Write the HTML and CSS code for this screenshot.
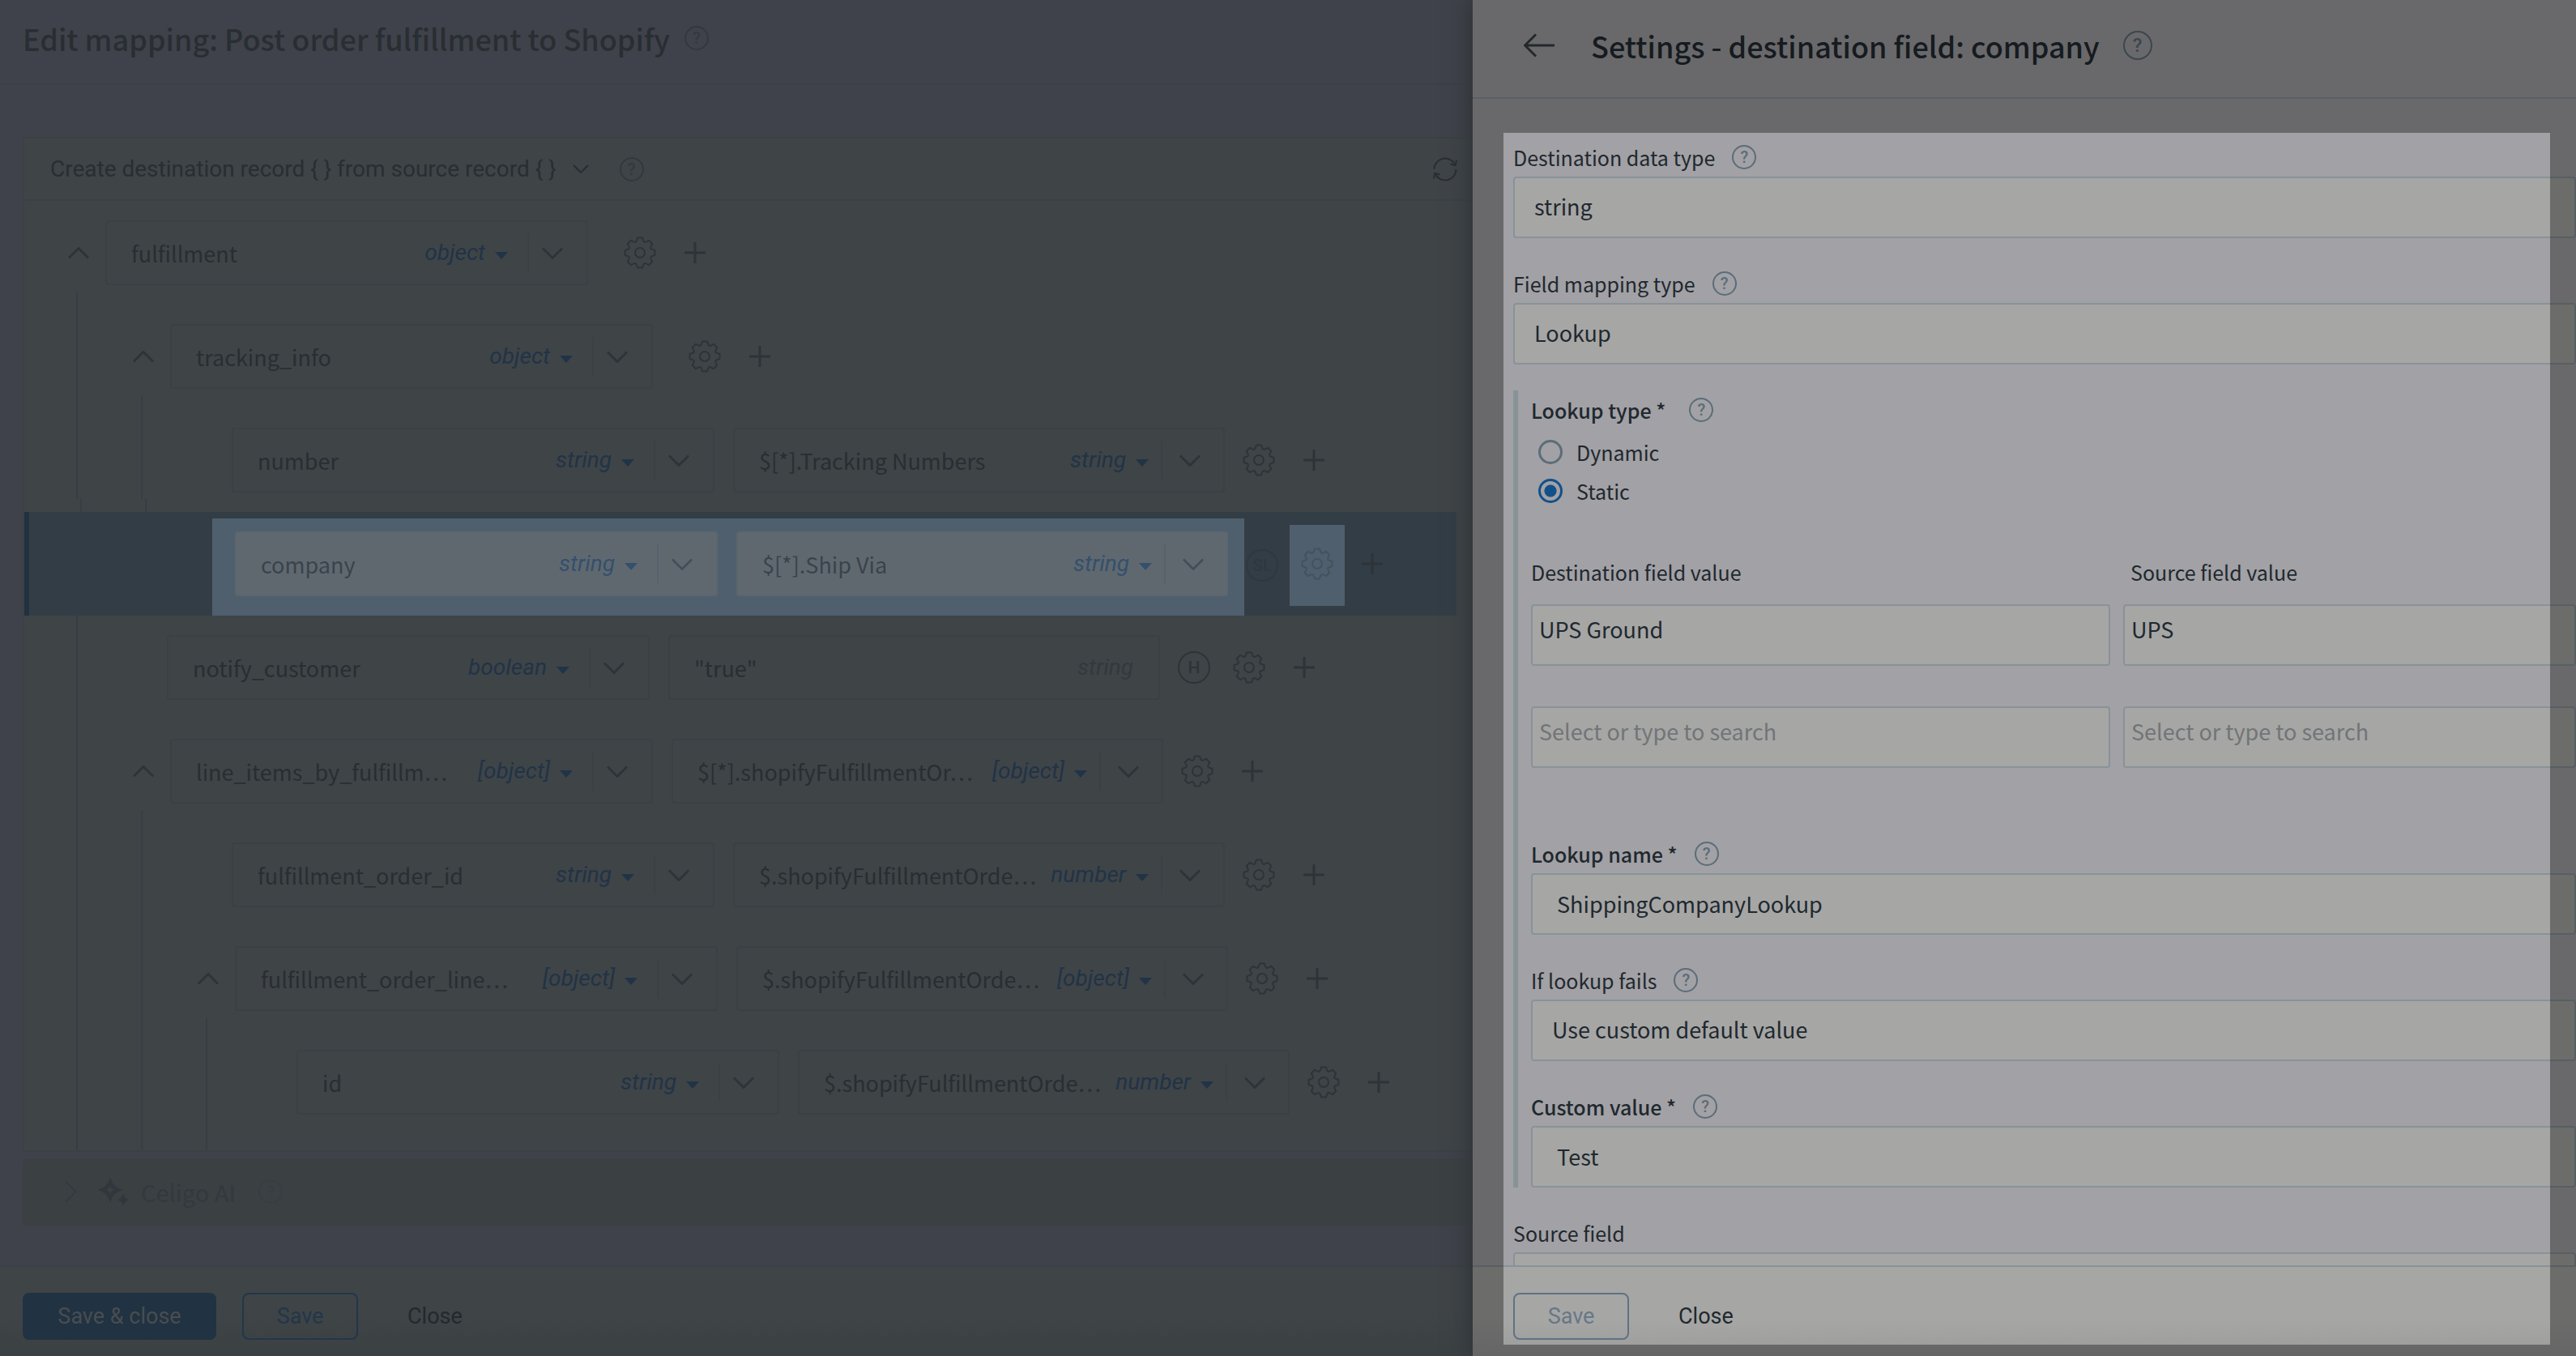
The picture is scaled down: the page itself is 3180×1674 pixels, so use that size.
FILE: index.html
```
<!DOCTYPE html>
<html lang="en">
<head>
<meta charset="utf-8">
<meta name="viewport" content="width=device-width, initial-scale=1">
<title>Edit mapping: Post order fulfillment to Shopify</title>
<link rel="stylesheet" href="styles.css">
</head>
<body>
<svg class="sprite" aria-hidden="true">
  <symbol id="gear" viewBox="-20 -20 40 40"><path d="M-3-18.5H3L4.5-14.2A2 2 0 0 0 6.9-13.2L11-15.2L15.2-11L13.2-6.9A2 2 0 0 0 14.2-4.5L18.5-3V3L14.2 4.5A2 2 0 0 0 13.2 6.9L15.2 11L11 15.2L6.9 13.2A2 2 0 0 0 4.5 14.2L3 18.5H-3L-4.5 14.2A2 2 0 0 0-6.9 13.2L-11 15.2L-15.2 11L-13.2 6.9A2 2 0 0 0-14.2 4.5L-18.5 3V-3L-14.2-4.5A2 2 0 0 0-13.2-6.9L-15.2-11L-11-15.2L-6.9-13.2A2 2 0 0 0-4.5-14.2Z"/><circle r="6"/></symbol>
  <symbol id="plus" viewBox="0 0 26 26"><path d="M13 0V26M0 13H26"/></symbol>
  <symbol id="down" viewBox="0 0 28 16"><path d="M1 1.500L14 14.500L27 1.500"/></symbol>
  <symbol id="up" viewBox="0 0 28 16"><path d="M1 14.500L14 1.500L27 14.500"/></symbol>
  <symbol id="right" viewBox="0 0 16 28"><path d="M1.500 1L14.500 14L1.500 27"/></symbol>
  <symbol id="back" viewBox="0 0 38 30"><path d="M15 1.500L1.500 15L15 28.500M1.500 15H38"/></symbol>
  <symbol id="refresh" viewBox="0 0 30 30"><path d="M1.500 15A13.500 13.500 0 0 1 27.500 10M28.500 15A13.500 13.500 0 0 1 2.500 20M29 3.500L27.700 10.300L21.500 8.500M1 26.500L2.300 19.700L8.500 21.500"/></symbol>
  <symbol id="sparkle" viewBox="0 0 40 36"><path fill-rule="evenodd" d="M16 0Q19 13 32 16Q19 19 16 32Q13 19 0 16Q13 13 16 0ZM16 11Q15 15 11 16Q15 17 16 21Q17 17 21 16Q17 15 16 11Z"/><path d="M32 20Q33.500 27 40 28Q33.500 29.500 32 36Q30.500 29.500 24 28Q30.500 27 32 20Z"/></symbol>
</svg>

<div class="app">
  <main class="mapper">
    <header class="mapper-head">
      <h1 class="title">Edit mapping: Post order fulfillment to Shopify</h1>
      <button class="help" type="button">?</button>
    </header>

    <div class="mapper-body">
      <section class="panel">
        <div class="panel-head">
          <button class="record-mode" type="button">Create destination record { } from source record { }
            <svg class="icon chev-sm"><use href="#down"/></svg></button>
          <button class="help" type="button">?</button>
          <button class="refresh" type="button" aria-label="Refresh"><svg class="icon refresh-icon"><use href="#refresh"/></svg></button>
        </div>

        <div class="tree">
          <div class="row root">
            <button class="toggle" type="button" aria-label="Collapse"><svg class="icon chev"><use href="#up"/></svg></button>
            <div class="field dest"><input value="fulfillment" aria-label="Destination field"><button class="type" type="button">object</button><button class="open" type="button" aria-label="Open"><svg class="icon chev"><use href="#down"/></svg></button></div>
            <div class="actions parent"><button class="act" type="button" aria-label="Settings"><svg class="icon gear"><use href="#gear"/></svg></button><button class="act" type="button" aria-label="Add"><svg class="icon plus"><use href="#plus"/></svg></button></div>
          </div>

          <div class="row">
            <span class="guide strong"></span>
            <button class="toggle" type="button" aria-label="Collapse"><svg class="icon chev"><use href="#up"/></svg></button>
            <div class="field dest"><input value="tracking_info" aria-label="Destination field"><button class="type" type="button">object</button><button class="open" type="button" aria-label="Open"><svg class="icon chev"><use href="#down"/></svg></button></div>
            <div class="actions parent"><button class="act" type="button" aria-label="Settings"><svg class="icon gear"><use href="#gear"/></svg></button><button class="act" type="button" aria-label="Add"><svg class="icon plus"><use href="#plus"/></svg></button></div>
          </div>

          <div class="row">
            <span class="guide strong"></span><span class="guide"></span><span class="leaf"></span>
            <div class="field dest"><input value="number" aria-label="Destination field"><button class="type" type="button">string</button><button class="open" type="button" aria-label="Open"><svg class="icon chev"><use href="#down"/></svg></button></div>
            <div class="field source"><input value="$[*].Tracking Numbers" aria-label="Source field"><button class="type" type="button">string</button><button class="open" type="button" aria-label="Open"><svg class="icon chev"><use href="#down"/></svg></button></div>
            <div class="actions"><button class="act" type="button" aria-label="Settings"><svg class="icon gear"><use href="#gear"/></svg></button><button class="act" type="button" aria-label="Add"><svg class="icon plus"><use href="#plus"/></svg></button></div>
          </div>

          <div class="row selected">
            <span class="guide"></span><span class="guide strong"></span>
            <div class="lit">
              <div class="field dest"><input value="company" aria-label="Destination field"><button class="type" type="button">string</button><button class="open" type="button" aria-label="Open"><svg class="icon chev"><use href="#down"/></svg></button></div>
              <div class="field source"><input value="$[*].Ship Via" aria-label="Source field"><button class="type" type="button">string</button><button class="open" type="button" aria-label="Open"><svg class="icon chev"><use href="#down"/></svg></button></div>
            </div>
            <div class="actions">
              <span class="tag-slot"><span class="tag faint">SL</span></span>
              <button class="act lit-act" type="button" aria-label="Settings"><svg class="icon gear"><use href="#gear"/></svg></button>
              <button class="act" type="button" aria-label="Add"><svg class="icon plus"><use href="#plus"/></svg></button>
            </div>
          </div>

          <div class="row">
            <span class="guide strong"></span><span class="leaf"></span>
            <div class="field dest"><input value="notify_customer" aria-label="Destination field"><button class="type" type="button">boolean</button><button class="open" type="button" aria-label="Open"><svg class="icon chev"><use href="#down"/></svg></button></div>
            <div class="field source"><input value="&quot;true&quot;" aria-label="Source field"><span class="type-fixed">string</span></div>
            <div class="actions"><span class="act"><span class="tag">H</span></span><button class="act" type="button" aria-label="Settings"><svg class="icon gear"><use href="#gear"/></svg></button><button class="act" type="button" aria-label="Add"><svg class="icon plus"><use href="#plus"/></svg></button></div>
          </div>

          <div class="row">
            <span class="guide strong"></span>
            <button class="toggle" type="button" aria-label="Collapse"><svg class="icon chev"><use href="#up"/></svg></button>
            <div class="field dest"><input value="line_items_by_fulfillm…" aria-label="Destination field"><button class="type" type="button">[object]</button><button class="open" type="button" aria-label="Open"><svg class="icon chev"><use href="#down"/></svg></button></div>
            <div class="field source"><input value="$[*].shopifyFulfillmentOr…" aria-label="Source field"><button class="type" type="button">[object]</button><button class="open" type="button" aria-label="Open"><svg class="icon chev"><use href="#down"/></svg></button></div>
            <div class="actions"><button class="act" type="button" aria-label="Settings"><svg class="icon gear"><use href="#gear"/></svg></button><button class="act" type="button" aria-label="Add"><svg class="icon plus"><use href="#plus"/></svg></button></div>
          </div>

          <div class="row">
            <span class="guide strong"></span><span class="guide"></span><span class="leaf"></span>
            <div class="field dest"><input value="fulfillment_order_id" aria-label="Destination field"><button class="type" type="button">string</button><button class="open" type="button" aria-label="Open"><svg class="icon chev"><use href="#down"/></svg></button></div>
            <div class="field source"><input value="$.shopifyFulfillmentOrde…" aria-label="Source field"><button class="type" type="button">number</button><button class="open" type="button" aria-label="Open"><svg class="icon chev"><use href="#down"/></svg></button></div>
            <div class="actions"><button class="act" type="button" aria-label="Settings"><svg class="icon gear"><use href="#gear"/></svg></button><button class="act" type="button" aria-label="Add"><svg class="icon plus"><use href="#plus"/></svg></button></div>
          </div>

          <div class="row">
            <span class="guide strong"></span><span class="guide"></span>
            <button class="toggle" type="button" aria-label="Collapse"><svg class="icon chev"><use href="#up"/></svg></button>
            <div class="field dest"><input value="fulfillment_order_line…" aria-label="Destination field"><button class="type" type="button">[object]</button><button class="open" type="button" aria-label="Open"><svg class="icon chev"><use href="#down"/></svg></button></div>
            <div class="field source"><input value="$.shopifyFulfillmentOrde…" aria-label="Source field"><button class="type" type="button">[object]</button><button class="open" type="button" aria-label="Open"><svg class="icon chev"><use href="#down"/></svg></button></div>
            <div class="actions"><button class="act" type="button" aria-label="Settings"><svg class="icon gear"><use href="#gear"/></svg></button><button class="act" type="button" aria-label="Add"><svg class="icon plus"><use href="#plus"/></svg></button></div>
          </div>

          <div class="row">
            <span class="guide strong"></span><span class="guide"></span><span class="guide"></span><span class="leaf"></span>
            <div class="field dest"><input value="id" aria-label="Destination field"><button class="type" type="button">string</button><button class="open" type="button" aria-label="Open"><svg class="icon chev"><use href="#down"/></svg></button></div>
            <div class="field source"><input value="$.shopifyFulfillmentOrde…" aria-label="Source field"><button class="type" type="button">number</button><button class="open" type="button" aria-label="Open"><svg class="icon chev"><use href="#down"/></svg></button></div>
            <div class="actions"><button class="act" type="button" aria-label="Settings"><svg class="icon gear"><use href="#gear"/></svg></button><button class="act" type="button" aria-label="Add"><svg class="icon plus"><use href="#plus"/></svg></button></div>
          </div>

          <div class="row tail">
            <span class="guide strong"></span><span class="guide"></span><span class="guide"></span>
          </div>
        </div>
      </section>

      <section class="ai">
        <svg class="icon ai-chev"><use href="#right"/></svg>
        <svg class="ai-icon"><use href="#sparkle"/></svg>
        <h2 class="ai-title">Celigo AI</h2>
        <button class="help" type="button">?</button>
      </section>
    </div>

    <footer class="foot">
      <button class="btn primary" type="button">Save &amp; close</button>
      <button class="btn outline" type="button">Save</button>
      <button class="btn text" type="button">Close</button>
    </footer>
  </main>

  <aside class="drawer">
    <header class="drawer-head">
      <button class="back" type="button" aria-label="Back"><svg class="icon back-icon"><use href="#back"/></svg></button>
      <h2 class="title">Settings - destination field: company</h2>
      <button class="help large" type="button">?</button>
    </header>

    <form class="form" id="settings">
      <div class="item">
        <div class="label-line"><label for="data-type">Destination data type</label><button class="help" type="button">?</button></div>
        <select id="data-type" class="box pick"><option>string</option></select>
      </div>
      <div class="item">
        <div class="label-line"><label for="mapping-type">Field mapping type</label><button class="help" type="button">?</button></div>
        <select id="mapping-type" class="box pick"><option>Lookup</option></select>
      </div>

      <div class="group">
        <div role="radiogroup" aria-labelledby="lookup-type">
          <div class="label-line wide"><span id="lookup-type" class="required">Lookup type *</span><button class="help" type="button">?</button></div>
          <div class="radios">
            <label class="radio"><input type="radio" name="lookup">Dynamic</label>
            <label class="radio"><input type="radio" name="lookup" checked>Static</label>
          </div>
        </div>

        <div class="pairs">
          <span class="pair-head" id="dest-col">Destination field value</span>
          <span class="pair-head indent" id="source-col">Source field value</span>
          <input class="box cell" value="UPS Ground" aria-labelledby="dest-col">
          <input class="box cell" value="UPS" aria-labelledby="source-col">
          <input class="box cell" placeholder="Select or type to search" aria-labelledby="dest-col">
          <input class="box cell" placeholder="Select or type to search" aria-labelledby="source-col">
        </div>

        <div class="item">
          <div class="label-line"><label class="required" for="lookup-name">Lookup name *</label><button class="help" type="button">?</button></div>
          <input id="lookup-name" class="box entry" value="ShippingCompanyLookup">
        </div>
        <div class="item">
          <div class="label-line"><label for="fails">If lookup fails</label><button class="help" type="button">?</button></div>
          <select id="fails" class="box pick"><option>Use custom default value</option></select>
        </div>
        <div class="item">
          <div class="label-line"><label class="required" for="custom">Custom value *</label><button class="help" type="button">?</button></div>
          <input id="custom" class="box entry" value="Test">
        </div>
      </div>

      <div class="item">
        <div class="label-line"><label for="source">Source field</label></div>
        <input id="source" class="box entry">
      </div>
    </form>

    <footer class="foot drawer-foot">
      <button class="btn outline" type="submit" form="settings" disabled>Save</button>
      <button class="btn text" type="button">Close</button>
    </footer>
    <div class="spotlight"></div>
  </aside>
</div>
</body>
</html>
```

FILE: styles.css
```
:root {
  --sans: "Noto Sans CJK KR", "Noto Sans CJK SC", "Noto Sans", sans-serif;
  --ui: Roboto, "Liberation Sans", sans-serif;
  --page: #3f424a;
  --panel: #3f4447;
  --line: #3a4145;
  --ink: #282e32;
  --icon: #2d3438;
  --blue: #213347;
  --guide: #363f44;
}

* { box-sizing: border-box; }

body {
  margin: 0;
  background: var(--page);
  color: var(--ink);
  font: 27px/40px var(--sans);
}

button, input, select {
  margin: 0;
  padding: 0;
  border: 0;
  background: none;
  color: inherit;
  font: inherit;
}

.sprite { display: none; }
.icon { display: block; fill: none; stroke: currentColor; stroke-width: 2; flex: none; overflow: visible; }
.gear { width: 40px; height: 40px; stroke-linejoin: round; }
.plus { width: 26px; height: 26px; stroke-width: 3; }
.chev { width: 26px; height: 15px; stroke-width: 3; }
.chev-sm { width: 20px; height: 11px; stroke-width: 3; }
.refresh-icon { width: 30px; height: 30px; }
.back-icon { width: 38px; height: 30px; stroke-width: 3; }

.app { display: flex; height: 100vh; overflow: hidden; }

.mapper { flex: 1; min-width: 0; display: flex; flex-direction: column; }

.mapper-head {
  display: flex;
  align-items: center;
  gap: 18px;
  height: 105px;
  padding: 0 28px 10px;
  border-bottom: 2px solid var(--line);
}

.title { margin: 0; font-size: 36px; line-height: 48px; font-weight: 500; white-space: nowrap; }

.help {
  flex: none;
  width: 30px;
  height: 30px;
  border: 2px solid currentColor;
  border-radius: 50%;
  color: #32393e;
  font: 500 20px/26px var(--ui);
  text-align: center;
}

.mapper-body { flex: 1; min-height: 0; padding: 64px 0 0 28px; }

.panel { background: var(--panel); border: 2px solid var(--line); border-right: 0; }

.panel-head {
  display: flex;
  align-items: center;
  height: 77px;
  padding: 0 19px 0 32px;
  border-bottom: 2px solid var(--line);
}

.record-mode { display: flex; align-items: center; gap: 20px; margin-right: 38px; font: 28px/40px var(--ui); white-space: nowrap; }
.refresh { margin-left: auto; }

.tree { padding-right: 20px; }

.row { display: flex; align-items: flex-end; height: 128px; padding-left: 34px; }
.root { height: 112px; }
.tail { height: 36px; }

.guide { flex: none; width: 80px; height: 100%; padding-left: 30px; }
.guide::before { content: ""; display: block; height: 100%; border-left: 2px solid var(--guide); }
.guide.strong::before { border-left-color: #333e46; }

.toggle { flex: none; display: flex; align-items: center; justify-content: center; width: 66px; height: 80px; margin-bottom: 8px; color: var(--icon); }
.leaf { flex: none; width: 62px; }

.field {
  flex: none;
  display: flex;
  align-items: center;
  height: 80px;
  margin-bottom: 8px;
  padding-left: 30px;
  border: 2px solid var(--line);
  border-radius: 4px;
}
.field input { flex: 1; min-width: 0; height: 76px; }
.dest { width: 596px; padding-right: 13px; }
.source { width: 607px; margin-left: 23px; padding-right: 7px; }

.type, .type-fixed { font: italic 28px/40px var(--ui); color: var(--blue); }
.type { display: flex; align-items: center; gap: 12px; margin-right: 24px; }
.type::after { content: ""; border: 8px solid transparent; border-top: 9px solid currentColor; border-bottom: 0; margin-top: 6px; }
.source .type { margin-right: 15px; }
.type-fixed { margin-right: 24px; color: #33393e; }

.open { display: flex; align-items: center; justify-content: center; width: 60px; height: 48px; border-left: 2px solid var(--line); color: var(--icon); }
.source .open { width: 70px; }

.actions { display: flex; align-items: flex-end; padding-left: 8px; }
.actions.parent { padding-left: 30px; }
.act { flex: none; display: flex; align-items: center; justify-content: center; width: 68px; height: 80px; margin-bottom: 8px; color: var(--icon); }

.tag {
  width: 40px;
  height: 40px;
  border: 2px solid currentColor;
  border-radius: 50%;
  font: 500 21px/37px var(--ui);
  text-align: center;
}
.tag.faint { color: #2f383f; }

/* The picked row reaches 16px into the row below it */
.selected {
  height: 144px;
  margin-bottom: -16px;
  padding-left: 39px;
  background:
    linear-gradient(#22313f, #22313f) 0 16px / 6px 128px no-repeat,
    linear-gradient(#333d46, #333d46) 0 16px / 100% 128px no-repeat;
}
.selected .guide::before { height: 16px; }
.lit {
  display: flex;
  height: 120px;
  margin-left: 33px;
  padding: 16px 20px 24px 28px;
  background: #4f5f6e;
  color: #39434c;
}
.lit .field { margin-bottom: 0; background: #60686f; border-color: #5b666e; }
.lit .type { color: #33506d; }
.lit .open { color: #434e58; border-color: #55616b; }
.selected .actions { padding-left: 0; }
.selected .act { margin-bottom: 24px; }
.tag-slot { width: 56px; height: 80px; margin-bottom: 22px; padding-left: 2px; display: flex; align-items: center; }
.selected .lit-act { height: 100px; margin-bottom: 12px; padding-bottom: 4px; background: #4f5f6e; color: #44525e; }

.ai {
  display: flex;
  align-items: center;
  height: 82px;
  margin-top: 9px;
  padding: 0 0 3px 52px;
  border-radius: 4px;
  background: #3b4043;
  color: #33393e;
}
.ai-chev { width: 15px; height: 28px; color: #343a3f; }
.ai-icon { width: 40px; height: 36px; margin: 0 14px 0 25px; fill: #31383d; }
.ai-title { margin: 0 28px 0 0; font-size: 29px; line-height: 40px; font-weight: 400; }
.ai .help { color: #373e42; }

.foot {
  display: flex;
  align-items: center;
  height: 112px;
  padding: 12px 28px 0;
  border-top: 2px solid var(--line);
  background: linear-gradient(var(--panel) 50%, #3b4043);
}
.btn { height: 58px; border-radius: 8px; font: 27px/40px var(--ui); white-space: nowrap; }
.primary { width: 239px; background: #213242; color: #484d51; }
.outline { width: 143px; border: 2px solid #22364a; color: #22364a; }
.primary + .outline { margin-left: 32px; }
.text { margin-left: 61px; color: #23292d; }

.drawer {
  position: relative;
  flex: none;
  width: 1362px;
  display: flex;
  flex-direction: column;
  overflow: hidden;
  background: #a2a1a5;
  color: #20282e;
}
.app .drawer { box-shadow: -2px 0 24px 4px #303538; }

.drawer-head {
  display: flex;
  align-items: center;
  height: 122px;
  padding: 0 30px 8px 63px;
  border-bottom: 2px solid #879399;
  color: #232a30;
}
.back { margin-right: 45px; color: #363e44; }
.drawer .help { color: #5b6d79; }
.drawer .help.large { width: 36px; height: 36px; margin-left: 29px; font-size: 24px; line-height: 32px; }

.form { flex: 1; min-height: 0; overflow: hidden; padding: 50px 0 0 50px; }

.item { margin-bottom: 34px; }
.label-line { display: flex; align-items: center; gap: 21px; height: 44px; margin-bottom: 2px; font-size: 25px; }
.label-line.wide { gap: 29px; }
.required { font-weight: 500; }

.box {
  display: block;
  width: 100%;
  height: 76px;
  border: 2px solid #879399;
  border-radius: 4px;
  background: #a6a6a5;
  appearance: none;
}
.pick { padding: 0 0 2px 24px; }
.entry { padding: 0 0 2px 30px; }
.cell { padding: 0 8px 15px; }
.cell::placeholder { color: #707577; opacity: 1; }

.group { margin: -2px 0 34px; padding: 2px 0 0 16px; border-left: 6px solid #879399; }
.group .item:last-child { margin-bottom: 0; }

.radios { padding-top: 4px; }
.radio { display: flex; align-items: center; gap: 17px; height: 48px; padding-left: 9px; font-size: 25px; }
.radio input { appearance: none; width: 30px; height: 30px; border: 3px solid #5b6d79; border-radius: 50%; }
.radio input:checked { border-color: #12508a; background: radial-gradient(#12508a 7px, transparent 8px); }

.pairs { display: grid; grid-template-columns: 715px 1fr; gap: 50px 16px; margin: 55px 0 84px; }
.pair-head { height: 44px; margin-bottom: -33px; font-size: 25px; line-height: 42px; }
.indent { padding-left: 9px; }

.drawer-foot { padding-left: 50px; border-color: #879399; background: linear-gradient(#a6a6a5 60%, #9c9c9c); }
.drawer .outline { border-color: #5f7284; color: #667886; }
.drawer .text { color: #20282e; }

/* Dims the drawer around the settings form */
.spotlight {
  position: absolute;
  inset: 164px 32px 14px 38px;
  box-shadow: 0 0 0 3000px rgba(0, 0, 0, .35);
  pointer-events: none;
}
```
